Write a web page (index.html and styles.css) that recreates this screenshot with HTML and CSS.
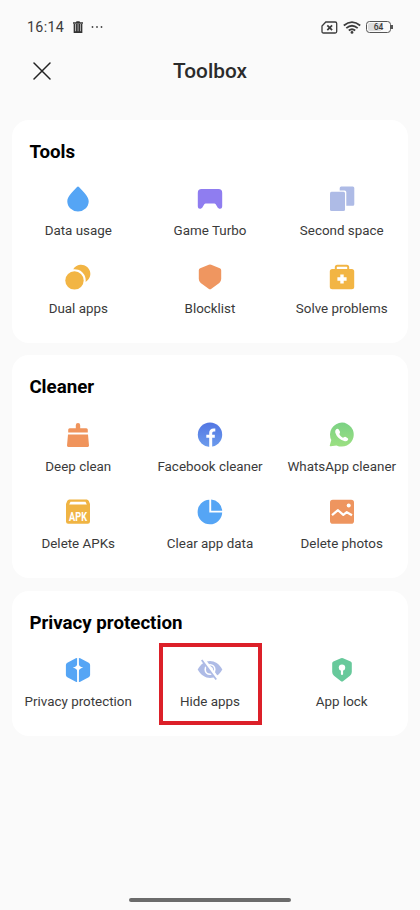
FILE: index.html
```html
<!DOCTYPE html>
<html lang="en">
<head>
<meta charset="utf-8">
<title>Toolbox</title>
<link rel="stylesheet" href="styles.css">
</head>
<body>
<header class="status">
  <span class="time">16:14</span>
  <svg class="trash" width="12" height="13" viewBox="0 0 12 13"><path d="M1 1.3h3L4.5.2h3L8 1.3h3v1.500H1z" fill="#333"/><path d="M2.500 3v8.200h7V3M4.900 3v8M7.200 3v8" fill="none" stroke="#333" stroke-width="1.700"/></svg>
  <svg class="dots" width="12" height="4" viewBox="0 0 12 4" fill="#444"><circle cx="1.500" cy="2" r=".9"/><circle cx="6" cy="2" r=".9"/><circle cx="10.500" cy="2" r=".9"/></svg>
  <svg class="sim" width="17" height="13" viewBox="0 0 17 13" fill="none" stroke="#3c3c3c"><path d="M4.800 1h9.400q1.500 0 1.500 1.500v8q0 1.500-1.500 1.500H2.500Q1 12 1 10.500V5z" stroke-width="1.300"/><path d="M6.300 4.300l4.800 4.800M11.100 4.300L6.300 9.100" stroke-width="1.700"/></svg>
  <svg class="wifi" width="18" height="13" viewBox="0 0 18 13" fill="none" stroke="#3c3c3c" stroke-width="1.800"><path d="M.8 4.500Q9-2.300 17.200 4.500M3.300 7.100Q9 2.400 14.700 7.100M5.800 9.500Q9 6.900 12.200 9.500"/><circle cx="9" cy="11.400" r="1.400" fill="#3c3c3c" stroke="none"/></svg>
  <span class="battery"><span class="level">64</span></span>
</header>
<div class="bar">
  <svg class="close" width="18" height="18" viewBox="0 0 18 18"><path d="M1 1l16 16M17 1L1 17" stroke="#222" stroke-width="1.500" stroke-linecap="round"/></svg>
  <h1>Toolbox</h1>
</div>
<main>
  <section class="card">
    <h2>Tools</h2>
    <div class="grid">
      <div class="item"><svg viewBox="0 0 26 26"><path d="M11.800 1.200Q13-.1 14.200 1.200C18.500 5.700 23.700 10.500 23.700 15.200a10.700 10.300 0 0 1-21.400 0C2.300 10.500 7.500 5.700 11.800 1.200z" fill="#55a5f5"/></svg><span>Data usage</span></div>
      <div class="item"><svg viewBox="0 0 26 26"><path d="M4.500 3h17q3.700 0 3.700 3.700v13.600c0 3.300-3.600 3.300-5 .4l-1.500-2.400q-.5-.8-1.400-.8H8.700q-.9 0-1.400.8l-1.500 2.400c-1.400 2.900-5 2.900-5-.4V6.700Q.8 3 4.500 3z" fill="#8f7df0"/></svg><span>Game Turbo</span></div>
      <div class="item"><svg viewBox="0 0 26 26" fill="#aebbe6"><rect x="1" y="5.700" width="15" height="19.300" rx="1.500"/><path d="M10.700 4.400V2q0-1.500 1.500-1.500h11.600q1.500 0 1.500 1.500v16.300q0 1.500-1.500 1.500h-6.500V6q0-1.600-1.600-1.600z"/></svg><span>Second space</span></div>
      <div class="item"><svg viewBox="0 0 26 26" fill="#f2b544"><circle cx="9.500" cy="16.400" r="9.200"/><path d="M8.200 5.200A9.200 9.200 0 1 1 20.600 17.900 11.300 11.300 0 0 0 8.200 5.200z"/></svg><span>Dual apps</span></div>
      <div class="item"><svg viewBox="0 0 26 26"><path d="M11.800.8q1.200-.5 2.400 0l8.600 3.400q1.400.6 1.400 2v8.900q0 2.300-1.900 3.800l-7.900 5.900q-1.400 1-2.800 0l-7.900-5.900q-1.900-1.500-1.900-3.800V6.200q0-1.400 1.400-2z" fill="#ef9660"/></svg><span>Blocklist</span></div>
      <div class="item"><svg viewBox="0 0 26 26"><rect x=".8" y="5" width="24.400" height="20.300" rx="2.500" fill="#f2b544"/><path d="M6.800 5V3.200q0-1.500 1.500-1.500h9.400q1.500 0 1.500 1.500V5" fill="none" stroke="#f2b544" stroke-width="2"/><path d="M13 10.400v9.200M8.400 15h9.200" stroke="#fff" stroke-width="3.400"/></svg><span>Solve problems</span></div>
    </div>
  </section>
  <section class="card">
    <h2>Cleaner</h2>
    <div class="grid">
      <div class="item"><svg viewBox="0 0 26 26" fill="#f0945c"><path d="M4.700 6.300h6.100V3.200a2.200 2.200 0 0 1 4.400 0v3.100h6.100q1.500 0 1.500 1.500v2.700H3.200V7.800q0-1.500 1.500-1.500zM3 12.600h20l1 11q.1 1.400-1.300 1.400H3.300Q1.900 25 2 23.600z"/></svg><span>Deep clean</span></div>
      <div class="item"><svg viewBox="0 0 26 26"><defs><linearGradient id="fb" x1="0" y1="0" x2="0" y2="1"><stop stop-color="#5276e3"/><stop offset="1" stop-color="#6c9bec"/></linearGradient></defs><circle cx="13" cy="12.700" r="12.200" fill="url(#fb)"/><path d="M13.700 24.900V11q0-3 3.100-3h1.500M9.300 14.300h8.500" fill="none" stroke="#fff" stroke-width="3"/></svg><span>Facebook cleaner</span></div>
      <div class="item"><svg viewBox="0 0 26 26"><defs><linearGradient id="wa" x1="0" y1="0" x2="0" y2="1"><stop stop-color="#7bd184"/><stop offset="1" stop-color="#9ce082"/></linearGradient></defs><path d="M13 .6a12 12 0 1 1-5.500 22.800L1.800 24.300q-1.400.2-.9-1.200L2.300 18A12 12 0 0 1 13 .6z" fill="url(#wa)"/><path d="M7.200 7.300q1.600-1.400 2.700.4l1 1.700q.5 1-.2 1.800-.6.700-.2 1.400 1.100 1.800 2.900 2.900.8.400 1.500-.2.900-.8 1.900-.3l1.600.9q1.600 1 .4 2.300-1.300 1.400-3.600.8-6.800-1.900-8.900-8.200-.6-2.300.9-3.500z" fill="#fff"/></svg><span>WhatsApp cleaner</span></div>
      <div class="item"><svg viewBox="0 0 26 26"><path d="M4.300.6h17.400q1.500 0 2.100 1.500l1.200 3v17.500q0 2.200-2.200 2.200H3.200Q1 24.800 1 22.600V5.100l1.200-3Q2.800.6 4.300.6z" fill="#f0b443"/><path d="M5.500 2.700h15l1.300 2.700H4.200z" fill="#fff"/><text class="apk" x="13" y="21.600" text-anchor="middle" textLength="18" lengthAdjust="spacingAndGlyphs">APK</text></svg><span>Delete APKs</span></div>
      <div class="item"><svg viewBox="0 0 26 26" fill="#55a5f5"><path d="M12.300.7v12.800h12.900A12.300 12.300 0 1 1 12.300.7z"/><path d="M14.200.6A12 12 0 0 1 25.200 11.700h-11z"/></svg><span>Clear app data</span></div>
      <div class="item"><svg viewBox="0 0 26 26"><rect x="1" y=".7" width="24" height="24" rx="2.800" fill="#ee955f"/><circle cx="19.700" cy="6.600" r="2" fill="#fff"/><path d="M3 16.200l6-5 5.300 4.700 3.500-2.700 5.200 3" fill="none" stroke="#fff" stroke-width="2.200" stroke-linejoin="round"/></svg><span>Delete photos</span></div>
    </div>
  </section>
  <section class="card">
    <h2>Privacy protection</h2>
    <div class="grid">
      <div class="item"><svg viewBox="0 0 26 26"><path d="M12.100.9v24.200q-.7 0-1.300-.3l-8.500-4.500Q.9 19.500.9 18V8q0-1.500 1.400-2.300l8.500-4.500q.6-.3 1.300-.3zM13.900.9v24.200q.7 0 1.300-.3l8.500-4.500q1.400-.8 1.400-2.300V8q0-1.500-1.400-2.300l-8.500-4.500q-.6-.3-1.300-.3z" fill="#55a5f5"/><path d="M13 5.200q.7 4.600 5.200 5.400-4.500.8-5.200 5.400-.7-4.600-5.200-5.400 4.500-.8 5.200-5.400z" fill="#fff"/></svg><span>Privacy protection</span></div>
      <div class="item marked"><svg viewBox="0 0 26 26"><path d="M.7 12.500C7 1.200 19 1.200 25.300 12.500 19 23.800 7 23.800.7 12.500z" fill="#aebbe6"/><circle cx="13" cy="12.500" r="4.800" fill="none" stroke="#fff" stroke-width="1.600"/><path d="M13 9.900a2.600 2.600 0 0 1 0 5.200" fill="none" stroke="#fff" stroke-width="1"/><path d="M6.300 2.300L20.800 22" stroke="#fff" stroke-width="3.500"/><path d="M4.700 3L19.200 22.500" stroke="#aebbe6" stroke-width="1.800"/></svg><span>Hide apps</span></div>
      <div class="item"><svg viewBox="0 0 26 26"><path d="M11.900 1.300q1.100-.5 2.200 0l7.500 3.100q1.200.5 1.200 1.800v8.900q0 2.200-1.800 3.600l-6.700 5.200q-1.300 1-2.600 0L5 18.700q-1.800-1.400-1.800-3.600V6.200q0-1.300 1.200-1.800z" fill="#67c99b"/><circle cx="13" cy="10.600" r="3.200" fill="#fff"/><path d="M13 11.500v5.500" stroke="#fff" stroke-width="2.200" stroke-linecap="round"/></svg><span>App lock</span></div>
    </div>
  </section>
</main>
<footer><div class="home"></div></footer>
</body>
</html>
```
FILE: styles.css
```css
*, *::before, *::after { box-sizing: border-box; }
body {
  margin: 0;
  height: 910px;
  display: flex;
  flex-direction: column;
  background: #fafafa;
  color: #3a3a3a;
  font-family: Roboto, sans-serif;
}
h1, h2 { margin: 0; }
svg { display: block; flex: none; }
.status {
  height: 53px;
  padding: 1px 27px 0 27px;
  display: flex;
  align-items: center;
}
.time { font-size: 14.3px; letter-spacing: .3px; width: 44.500px; color: #3c3c3c; }
.dots { margin-left: 7px; }
.sim { margin-left: auto; }
.wifi { margin: 0 5px; }
.battery {
  position: relative;
  width: 25px;
  height: 12px;
  margin-right: 2px;
  padding: 1px;
  border: 1px solid #555;
  border-radius: 3.500px;
}
.battery::after {
  content: "";
  position: absolute;
  right: -3px;
  top: 3px;
  width: 2px;
  height: 4px;
  background: #555;
}
.level {
  display: block;
  height: 8px;
  border-radius: 2px;
  background: linear-gradient(90deg, #ddd 64%, transparent 64%);
  font-size: 8.500px;
  font-weight: 500;
  line-height: 8.500px;
  text-align: center;
}
.bar {
  height: 36px;
  padding: 0 33px;
  display: grid;
  grid-template-columns: 18px 1fr 18px;
  align-items: center;
}
h1 {
  text-align: center;
  font-size: 20.800px;
  font-weight: 500;
  line-height: 24px;
  color: #2b2b2b;
}
main {
  padding: 31px 12.400px 0;
  display: flex;
  flex-direction: column;
  gap: 12.500px;
}
.card {
  padding: 20.600px 0 26.300px;
  background: #fff;
  border-radius: 17px;
}
h2 {
  padding-left: 17px;
  font-size: 18.700px;
  line-height: 22px;
  font-weight: 700;
  color: #000;
}
.grid {
  margin-top: 23.900px;
  display: grid;
  grid-template-columns: repeat(3, 1fr);
  row-gap: 24.800px;
}
.item {
  position: relative;
  display: flex;
  flex-direction: column;
  align-items: center;
  gap: 10.700px;
  font-size: 13.400px;
  line-height: 16px;
  white-space: nowrap;
}
.item svg { width: 26px; height: 26px; }
.marked::before {
  content: "";
  position: absolute;
  left: 14.500px;
  top: -14.500px;
  width: 103px;
  height: 82px;
  border: 4px solid #dc2029;
}
.apk { font: 700 12px Roboto, sans-serif; fill: #fff; }
footer {
  margin-top: auto;
  height: 12px;
  display: flex;
  justify-content: center;
}
.home { width: 162px; height: 4px; border-radius: 2px; background: #6b6b6b; }
```
